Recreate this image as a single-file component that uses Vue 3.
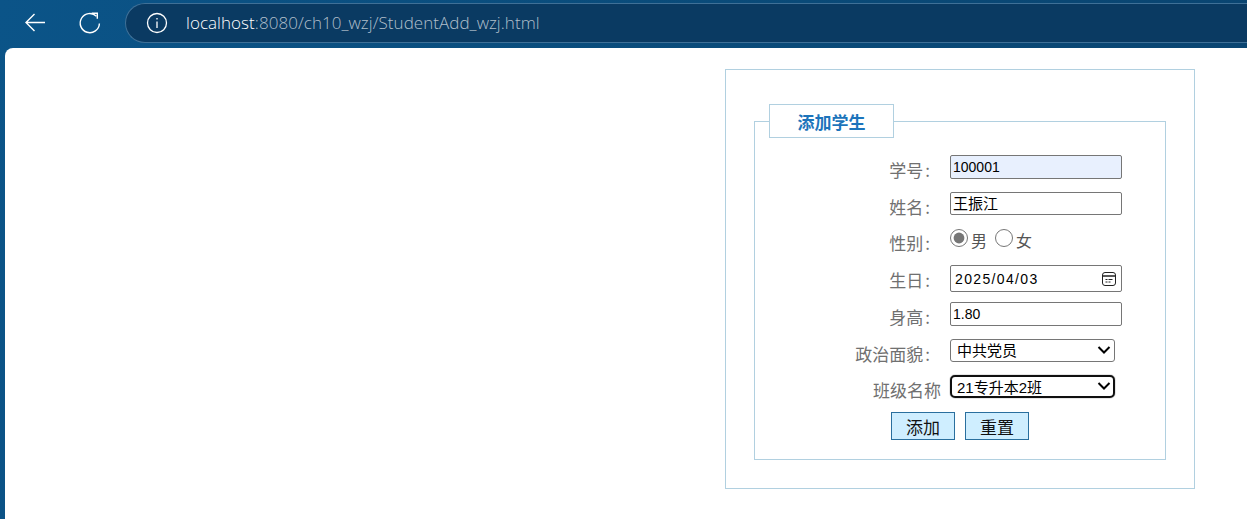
<script setup>
const rows = [
  { label: '学号', type: 'text', value: '100001', cls: 'filled' },
  { label: '姓名', type: 'text', value: '王振江', cls: 'cjk' },
]
</script>

<template>
  <div class="window">
    <header class="toolbar">
      <svg class="nav back" width="24" height="24" viewBox="0 0 24 24" fill="none" stroke="#fff" stroke-width="1.4">
        <path d="M3 11.5H22M11.5 3L3 11.5L11.5 20" />
      </svg>
      <svg class="nav reload" width="24" height="24" viewBox="0 0 24 24" fill="none" stroke="#fff" stroke-width="1.4">
        <path d="M18.5 5.2A9.6 9.6 0 1 0 21.4 12.5" />
        <path d="M13.6 2.2L19.3 2.2L19.3 7.8" />
      </svg>
      <div class="address">
        <svg width="22" height="22" viewBox="0 0 22 22" fill="none" stroke="#fff" stroke-width="1.3">
          <circle cx="11" cy="11" r="9.5" />
          <path d="M11 9.6V16M11 6V7.6" />
        </svg>
        <span class="url"><span class="host">localhost</span>:8080/ch10_wzj/StudentAdd_wzj.html</span>
      </div>
    </header>
    <main class="page">
      <div class="box">
        <form>
          <fieldset>
            <legend><span>添加学生</span></legend>
            <div class="grid">
              <template v-for="r in rows" :key="r.label">
                <label class="lab">{{ r.label }}<i class="colon">:</i></label>
                <input :class="['field', r.cls]" :type="r.type" :value="r.value" />
              </template>
              <label class="lab">性别<i class="colon">:</i></label>
              <div class="radios">
                <input type="radio" name="sex" checked /><span>男</span>
                <input type="radio" name="sex" /><span>女</span>
              </div>
              <label class="lab">生日<i class="colon">:</i></label>
              <div class="date">
                <span class="datetext">2025/04/03</span>
                <svg width="16" height="16" viewBox="0 0 16 16" fill="none" stroke="#222">
                  <rect x="1.5" y="1.5" width="13" height="13" rx="2.5" />
                  <path d="M2 5H14" stroke-width="1.5" />
                  <path d="M4.5 8.5H6.5M7.5 8.5H11.5M4.5 11H6.5M7.5 11H9.5" stroke-width="1" />
                </svg>
              </div>
              <label class="lab">身高<i class="colon">:</i></label>
              <input class="field" type="text" value="1.80" />
              <label class="lab">政治面貌<i class="colon">:</i></label>
              <div class="select">
                <span>中共党员</span>
                <svg width="14" height="8" viewBox="0 0 14 8" fill="none" stroke="#000" stroke-width="2"><path d="M1.5 1L7 6.5L12.5 1" /></svg>
              </div>
              <label class="lab wide">班级名称</label>
              <div class="select focus">
                <span>21专升本2班</span>
                <svg width="14" height="8" viewBox="0 0 14 8" fill="none" stroke="#000" stroke-width="2"><path d="M1.5 1L7 6.5L12.5 1" /></svg>
              </div>
            </div>
            <div class="actions">
              <button type="button">添加</button>
              <button type="button">重置</button>
            </div>
          </fieldset>
        </form>
      </div>
    </main>
  </div>
</template>

<style>
html, body { margin: 0; background: #0a4f80; overflow: hidden; }
</style>

<style scoped>
.window {
  width: 1247px;
  height: 519px;
  display: flex;
  flex-direction: column;
  background: linear-gradient(100deg, #0b5488 0%, #0a4a78 60%, #0a4470 100%);
  font-family: "Noto Sans CJK SC", "Liberation Sans", sans-serif;
}
.toolbar {
  height: 48px;
  flex: none;
  display: flex;
  align-items: flex-start;
  box-sizing: border-box;
}
.nav { flex: none; margin-top: 11px; }
.back { margin-left: 23px; }
.reload { margin-left: 31px; }
.address {
  flex: 1;
  box-sizing: border-box;
  height: 40px;
  margin: 3px 0 0 23px;
  padding-left: 20px;
  display: flex;
  align-items: center;
  gap: 18px;
  border: 1px solid #3f7097;
  border-right: none;
  border-radius: 20px 0 0 20px;
  background: #0a3a62;
}
.url {
  font-family: "Open Sans", "Liberation Sans", sans-serif;
  font-size: 17px;
  font-weight: 300;
  color: #b0bfcb;
  letter-spacing: 0.05px;
  padding-bottom: 2px;
}
.host { color: #fff; }
.page {
  flex: 1;
  margin-left: 5px;
  background: #fff;
  border-top-left-radius: 8px;
  display: flex;
  justify-content: flex-end;
  align-items: flex-start;
  padding: 21px 52px 0 0;
}
.box {
  box-sizing: border-box;
  width: 470px;
  height: 420px;
  border: 1px solid #b1d0e0;
  padding: 34px 28px 0;
}
fieldset {
  box-sizing: border-box;
  width: 412px;
  height: 356px;
  margin: 0;
  padding: 0;
  border: 1px solid #b1d0e0;
}
legend {
  box-sizing: border-box;
  width: 125px;
  height: 34px;
  margin-left: 14px;
  padding: 0;
  border: 1px solid #b1d0e0;
  background: #fff;
  color: #1c74bb;
  font-size: 17px;
  font-weight: 700;
  line-height: 33px;
  display: flex;
  justify-content: center;
}
.grid {
  display: grid;
  grid-template-columns: 175px 172px;
  column-gap: 20px;
  grid-template-rows: 24px 23px 24px 24px 24px 23px 23px;
  row-gap: 13px;
  margin-top: 17px;
}
.lab {
  color: #707070;
  font-size: 17px;
  line-height: 24px;
  text-align: right;
  padding-top: 3px;
  white-space: nowrap;
}
.colon { font-style: normal; margin-left: 2px; }
.lab.wide { margin-right: -11px; }
.field, .date {
  box-sizing: border-box;
  width: 172px;
  height: 100%;
  margin: 0;
  padding: 0 2px;
  border: 1px solid #767676;
  border-radius: 2px;
  font-family: "Liberation Sans", "Noto Sans CJK SC", sans-serif;
  font-size: 14px;
  color: #000;
  background: #fff;
  outline: none;
}
.cjk { font-size: 15px; padding-bottom: 2px; }
.filled { background: #e8f0fe; }
.radios {
  display: flex;
  align-items: center;
  color: #555;
  font-size: 16px;
  height: 100%;
}
.radios input {
  width: 18px;
  height: 18px;
  margin: 0 3px 0 0;
  accent-color: #767676;
  position: relative;
  top: -2px;
}
.radios span { margin-right: 8px; }
.date {
  height: 27px;
  display: flex;
  align-items: center;
  justify-content: space-between;
  padding: 0 4px;
}
.datetext { letter-spacing: 1.35px; font-size: 14px; }
.select {
  box-sizing: border-box;
  width: 165px;
  height: 100%;
  display: flex;
  align-items: center;
  justify-content: space-between;
  padding: 0 3px 2px 6px;
  border: 1px solid #767676;
  border-radius: 3px;
  font-family: "Liberation Sans", "Noto Sans CJK SC", sans-serif;
  font-size: 15px;
  color: #000;
}
.select.focus {
  border: 2px solid #101010;
  border-radius: 5px;
  padding: 0 2px 1px 5px;
  box-shadow: 0 0 1px #000;
}
.actions {
  display: flex;
  gap: 10px;
  margin: 14px 0 0 136px;
}
button {
  box-sizing: border-box;
  width: 64px;
  height: 28px;
  padding: 0;
  border: 1px solid #2a6f9e;
  background: #cfeeff;
  color: #111;
  font-family: "Noto Sans CJK SC", sans-serif;
  font-size: 17px;
}
</style>
